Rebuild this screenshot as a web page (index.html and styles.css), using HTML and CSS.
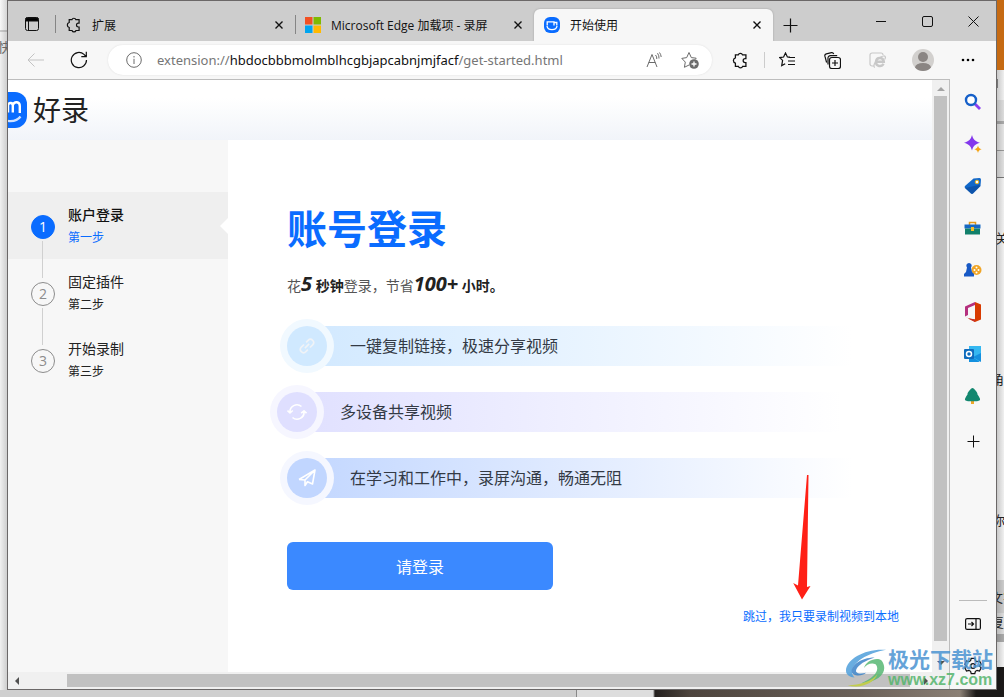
FILE: index.html
```html
<!DOCTYPE html>
<html lang="zh-CN">
<head>
<meta charset="utf-8">
<title>开始使用</title>
<link rel="stylesheet" href="styles.css">
</head>
<body>
<svg class="defs" aria-hidden="true">
  <symbol id="puzzle" viewBox="0 0 16 16"><path d="M3.200 2.700h2.700a2.100 2.100 0 0 1 4 0h3.200v3.500h-.7a1.900 1.900 0 0 0 0 3.800h.7v3.500H10a2.100 2.100 0 0 1-4 0H3.200v-3a2.600 2.600 0 0 1 0-5z"/></symbol>
  <symbol id="cross" viewBox="0 0 8 8"><path d="M.5.5l7 7M7.500.5l-7 7"/></symbol>
</svg>
<div class="desktop">
  <div class="behind behind-left"><span>快</span></div>
  <div class="behind behind-right">
    <i class="photo"></i><i class="pane"></i>
    <span class="t1">关</span><span class="t2">角</span><span class="t3">你</span><span class="t4">文字</span><span class="t5">复</span>
  </div>
  <div class="behind behind-bottom"></div>

  <div class="window">
    <header class="tabstrip">
      <button class="tab-menu" aria-label="标签页操作"><svg class="line" width="16" height="16" viewBox="0 0 16 16"><rect x="1.500" y="1.500" width="13" height="13" rx="2"/><path d="M2 2h12v3H2z" fill="#000"/><path d="M4.500 5v9"/></svg></button>
      <div class="tab">
        <svg class="line mid" width="16" height="16"><use href="#puzzle"/></svg><span>扩展</span>
        <button class="tab-close" aria-label="关闭"><svg class="line bold" width="8" height="8"><use href="#cross"/></svg></button>
      </div>
      <div class="tab">
        <svg width="16" height="16" viewBox="0 0 16 16"><path fill="#f25022" d="M0 0h7.500v7.500H0z"/><path fill="#7fba00" d="M8.500 0H16v7.500H8.500z"/><path fill="#00a4ef" d="M0 8.500h7.500V16H0z"/><path fill="#ffb900" d="M8.500 8.500H16V16H8.500z"/></svg><span>Microsoft Edge 加载项 - 录屏</span>
        <button class="tab-close" aria-label="关闭"><svg class="line bold" width="8" height="8"><use href="#cross"/></svg></button>
      </div>
      <div class="tab active">
        <svg width="16" height="16" viewBox="0 0 16 16"><rect width="16" height="16" rx="6" fill="#0a6cff"/><path d="M3.200 8.500V4.800H10V8.500M10 5.500h2.800V8.500M3 9c.5 4.800 9.500 4.800 10 0" fill="none" stroke="#fff" stroke-width="1.300"/></svg><span>开始使用</span>
        <button class="tab-close" aria-label="关闭"><svg class="line bold" width="8" height="8"><use href="#cross"/></svg></button>
      </div>
      <button class="tab-new" aria-label="新建标签页"><svg class="line mid" width="15" height="15" viewBox="0 0 15 15"><path d="M7.500.5v14M.5 7.500h14"/></svg></button>
      <div class="controls">
        <button aria-label="最小化"><svg class="line" width="10" height="10" viewBox="0 0 10 10"><path d="M0 5.500h10"/></svg></button>
        <button aria-label="最大化"><svg class="line" width="11" height="11" viewBox="0 0 11 11"><rect x=".5" y=".5" width="10" height="10" rx="1.500"/></svg></button>
        <button aria-label="关闭窗口"><svg class="line" width="11" height="11" viewBox="0 0 11 11"><path d="M.5.5l10 10M10.500.5l-10 10"/></svg></button>
      </div>
    </header>

    <nav class="toolbar">
      <button class="tool nav faint" aria-label="后退"><svg class="line" width="17" height="14" viewBox="0 0 17 14"><path d="M7.500.5L1 7l6.500 6.500M1 7h16"/></svg></button>
      <button class="tool nav" aria-label="刷新"><svg class="line mid" width="18" height="18" viewBox="0 0 18 18"><path d="M16.500 9A7.600 7.600 0 1 1 14 3.400L16 5.500M16.300.8v4.900h-5"/></svg></button>
      <div class="address">
        <svg class="line grey" width="16" height="16" viewBox="0 0 16 16"><circle cx="8" cy="8" r="7.300"/><path d="M8 6.800V12M8 4v1.500"/></svg>
        <div class="url" role="textbox" aria-label="地址栏">extension://<b>hbdocbbbmolmblhcgbjapcabnjmjfacf</b>/get-started.html</div>
        <button class="in-bar" aria-label="朗读"><svg class="line grey" width="16" height="16" viewBox="0 0 16 16"><path d="M1 15L6 2.500 11 15M2.700 10.500h6.600M9.500 3a5 5 0 0 1 1.300 4M11.500 1.200A8 8 0 0 1 13 6.500M13.500.5A9 9 0 0 1 15.200 5"/></svg></button>
        <button class="in-bar" aria-label="收藏此页"><svg class="line grey" width="18" height="18" viewBox="0 0 18 18"><path d="M8 14l-4.600 2.300.9-5.200L.8 7.400l4.900-.8L8 1.500l2.300 5.100 4.900.6-1 1.200"/><circle cx="13" cy="13" r="4.800" fill="#6b6b6b" stroke="none"/><path d="M13 10.500v5M10.500 13h5" stroke="#fff" stroke-width="1.300"/></svg></button>
      </div>
      <button class="tool ext" aria-label="扩展"><svg class="line mid" width="17" height="17"><use href="#puzzle"/></svg></button>
      <button class="tool" aria-label="收藏夹"><svg class="line mid" width="17" height="16" viewBox="0 0 17 16"><path d="M11 5.200L8.400 5 6.500 1 4.600 5 .8 5.600l2.800 2.800-.9 5.200 3.500-1.900M9.500 5.500H16M9 9h7M9 12.500h7"/></svg></button>
      <button class="tool" aria-label="集锦"><svg class="line mid" width="17" height="17" viewBox="0 0 17 17"><path d="M2.600 10.500L.9 4.200a2 2 0 0 1 1.400-2.400L7.500.7a2 2 0 0 1 2.200 1.200M4 12.500V6.300A2.500 2.500 0 0 1 6.500 3.600h6.700"/><rect x="5.500" y="5.500" width="11" height="11" rx="2.300"/><path d="M11 8v6M8 11h6"/></svg></button>
      <button class="tool" aria-label="IE 模式"><svg class="ie" width="18" height="17" viewBox="0 0 18 17"><path d="M5 14H3a2 2 0 0 1-2-2V3a2 2 0 0 1 2-2h9a2 2 0 0 1 2 2" /><path stroke-width="2.500" d="M6.500 9.800h8.300c0-5-7.600-5-7.800.3-.1 4.600 5.800 5 7.500 1.600"/><path d="M6 15.500C2.500 15 8 5 14.500 4c2.500-.3 2.200 1.800 1.200 3.500"/></svg></button>
      <button class="tool" aria-label="个人资料"><svg width="22" height="22" viewBox="0 0 22 22"><clipPath id="av"><circle cx="11" cy="11" r="11"/></clipPath><g clip-path="url(#av)"><path fill="#d2d0ce" d="M0 0h22v22H0z"/><circle cx="11" cy="8" r="5" fill="#8a8583"/><ellipse cx="11" cy="18.500" rx="8" ry="4.500" fill="#8a8583"/></g></svg></button>
      <button class="tool" aria-label="更多"><svg width="14" height="4" viewBox="0 0 14 4"><circle cx="2" cy="2" r="1.300"/><circle cx="7" cy="2" r="1.300"/><circle cx="12" cy="2" r="1.300"/></svg></button>
    </nav>

    <div class="content">
      <div class="viewport">
        <div class="page">
          <header class="brand">
            <svg width="19" height="36" viewBox="0 0 19 36"><rect x="-17" width="36" height="36" rx="12" fill="#0a6cff"/><path d="M-5 20V12M0 11.500v9M0 13c1-3 4.800-2.500 4.800.5v7M4.800 13c1.500-4 7-3.500 7 1v7" fill="none" stroke="#fff" stroke-width="2.400"/><path d="M-10 22C-6 31 8 31 12.500 24.500" fill="none" stroke="#cfe2ff" stroke-width="2.200"/></svg>
            <span>好录</span>
          </header>
          <div class="columns">
            <ol class="steps">
              <li class="step current"><span class="num">1</span><div><strong>账户登录</strong><small>第一步</small></div></li>
              <li class="step"><span class="num">2</span><div><strong>固定插件</strong><small>第二步</small></div></li>
              <li class="step"><span class="num">3</span><div><strong>开始录制</strong><small>第三步</small></div></li>
            </ol>
            <main class="login">
              <h1>账号登录</h1>
              <p class="lead">花<em>5</em> <b>秒钟</b>登录，节省<em>100+</em> <b>小时。</b></p>
              <ul class="features">
                <li class="sky"><span class="badge"><svg width="18" height="18" viewBox="0 0 18 18"><g transform="rotate(-45 9 9)"><path d="M8 5.800H4.200a3.200 3.200 0 0 0 0 6.400H7M10 12.200h3.800a3.200 3.200 0 0 0 0-6.400H11M6 9h6"/></g></svg></span>一键复制链接，极速分享视频</li>
                <li class="violet"><span class="badge"><svg width="20" height="18" viewBox="0 0 20 18"><path d="M3 9.500A7 7 0 0 1 14.500 3.500M17 8.500A7 7 0 0 1 5.500 14.500M.5 7.500L3 10l2.800-2.500M14.200 10.200L17 7.800l2.500 2.400"/></svg></span>多设备共享视频</li>
                <li class="blue"><span class="badge"><svg width="18" height="18" viewBox="0 0 18 18"><path d="M1 10.500L17 1l-2.500 14-5-2.300L7 16.500V11L17 1M1 10.500L7 11"/></svg></span>在学习和工作中，录屏沟通，畅通无阻</li>
              </ul>
              <button class="signin">请登录</button>
              <a class="skip" href="#">跳过，我只要录制视频到本地</a>
              <svg class="pointer" width="18" height="125" viewBox="0 0 18 125"><path fill="#ff2016" d="M14 0h1.500L14 112l3.500-1L9 124.500.2 108l4.800 2.500z"/></svg>
            </main>
          </div>
        </div>
        <div class="vbar"><i class="up"></i><i class="thumb"></i><i class="down"></i></div>
        <div class="hbar"><i class="left"></i><i class="thumb"></i><i class="right"></i></div>
      </div>

      <aside class="sidebar">
        <button aria-label="搜索"><svg width="18" height="18" viewBox="0 0 18 18"><path d="M11 11l5 5" stroke="#8a3ff0" stroke-width="2.800"/><circle cx="7" cy="7" r="5" fill="#fff" stroke="#1660c9" stroke-width="2.400"/></svg></button>
        <button aria-label="发现"><svg width="18" height="18" viewBox="0 0 18 18"><path fill="#8338ec" d="M8 0c1.200 4.500 3 6.300 8 7.800-5 1.500-6.800 3.200-8 7.700C6.800 11 5 9.300 0 7.800 5 6.300 6.800 4.500 8 0z"/><path fill="#f5a516" d="M14 10.500c.5 2.200 1.500 3 3.700 3.700-2.200.6-3.200 1.500-3.700 3.700-.5-2.200-1.500-3.100-3.700-3.700 2.200-.7 3.200-1.500 3.700-3.700z"/></svg></button>
        <button aria-label="购物"><svg width="18" height="18" viewBox="0 0 18 18"><path fill="#1268c9" d="M9.500 1.500L15.500 1a1.500 1.500 0 0 1 1.500 1.500l-.5 6.500-7.500 7.500a1.500 1.500 0 0 1-2 0L1 11a1.500 1.500 0 0 1 0-2z"/><path fill="#0b4897" d="M1 11l14-3 1.500 1L9 16.500a1.500 1.500 0 0 1-2 0z" opacity=".6"/><circle cx="13" cy="5" r="1.800" fill="#fff" stroke="#f2b61d"/></svg></button>
        <button aria-label="工具"><svg width="18" height="18" viewBox="0 0 18 18"><path fill="none" stroke="#e59a18" stroke-width="1.500" d="M5.500 6V3.500h6V6"/><path fill="#1668c2" d="M.5 5.500h16v4H.5z"/><path fill="#12806b" d="M1 9.500h15v6H1z"/><path fill="#f6bd27" d="M7 8h3v4H7z"/></svg></button>
        <button aria-label="游戏"><svg width="18" height="18" viewBox="0 0 18 18"><circle cx="12.500" cy="9" r="5" fill="#f0a526"/><g fill="#fff"><circle cx="12.500" cy="6.500" r="1"/><circle cx="10.500" cy="9" r="1"/><circle cx="14.500" cy="9" r="1"/><circle cx="12.500" cy="11.500" r="1"/></g><path fill="#1859c5" d="M5 2a2.700 2.700 0 0 1 2 4.500L8 11l2 2v2.500H0V13l2-2 1-4.500A2.700 2.700 0 0 1 5 2z"/></svg></button>
        <button aria-label="Office"><svg width="18" height="20" viewBox="0 0 18 20"><path fill="#d83b01" d="M11 0l6 2.500v15L11 20l-7-3.500 7 1V3z"/><path fill="#b5307e" d="M11 0L1 4.500v10l3-1.500V6l7-3z"/><path fill="#c8322b" d="M1 14.500L11 20v-2.500L4 16z"/></svg></button>
        <button aria-label="Outlook"><svg width="18" height="18" viewBox="0 0 18 18"><path fill="#35b8f1" d="M5 1h12v15H5z"/><path fill="#1490df" d="M17 8l-8 4 8 5zM5 10l11 7H5z"/><rect y="4" width="10" height="10" rx="1" fill="#0f6cbd"/><circle cx="5" cy="9" r="2.500" fill="none" stroke="#fff" stroke-width="1.500"/></svg></button>
        <button aria-label="树"><svg width="18" height="18" viewBox="0 0 18 18"><path fill="#efa728" d="M7 13h3v4H7z"/><path fill="#13876f" d="M8.500 1c1.500 0 5.500 5 5 6.500 1.500 2 3 4.500 2.500 5.500s-2.500 1.300-7.500 1.300S1.500 14 1 13s1-3.500 2.500-5.500C3 6 7 1 8.500 1z"/></svg></button>
        <button class="add" aria-label="添加"><svg class="line" width="13" height="13" viewBox="0 0 13 13"><path d="M6.500.5v12M.5 6.500h12"/></svg></button>
        <hr>
        <button aria-label="隐藏侧栏"><svg class="line mid" width="16" height="12" viewBox="0 0 16 12"><rect x=".6" y=".6" width="14.800" height="10.800" rx="1.500"/><path d="M11 1v10M3 6h5.500M6.500 4l2 2-2 2"/></svg></button>
        <button aria-label="设置"><svg class="line mid" width="18" height="18" viewBox="0 0 18 18"><circle cx="9" cy="9" r="2.300"/><path d="M7.200 1.300h3.600l.6 2.400 1.700 1 2.400-.7 1.700 3.100L15.500 9l1.700 1.900-1.700 3.100-2.400-.7-1.700 1-.6 2.400H7.200l-.6-2.400-1.700-1-2.400.7L.8 10.900 2.500 9 .8 7.100 2.500 4l2.400.7 1.700-1z"/></svg></button>
      </aside>
    </div>
  </div>

  <div class="watermark">
    <svg width="42" height="40" viewBox="0 0 44 40"><path fill="#4f9fdb" d="M42 1C22-1 0 10 0 23c0 4 4 7 9 7C-1 20 18 5 42 1z"/><path fill="#3c83c8" d="M30 9C15 9 5 18 6 24c1 5 11 5 15 1-8 2-12 0-10-4s9-9 19-12z"/><path fill="#58b874" d="M37 12c8 10 0 22-21 24C30 30 36 22 31 16c-4-2-10 0-12 4 1-7 13-12 18-8z"/><path fill="#c2cf3a" d="M2 38c12 0 26-4 31-12-3 10-18 16-31 12z"/></svg>
    <p><b>极光下载站</b><span>www.xz7.com</span></p>
  </div>
</div>
</body>
</html>
```
FILE: styles.css
```css
* { box-sizing: border-box; }
body {
  margin: 0;
  color: #222;
  font-family: "Open Sans", "Noto Sans CJK SC", sans-serif;
  font-size: 12px;
}
button {
  display: flex;
  align-items: center;
  justify-content: center;
  padding: 0;
  border: 0;
  background: none;
  font-family: inherit;
}
svg { display: block; flex: none; }
ul, ol { margin: 0; padding: 0; list-style: none; }
.defs { position: absolute; width: 0; height: 0; }
.line { fill: none; stroke: #111; stroke-width: 1; }
.line.mid { stroke-width: 1.2; }
.line.bold { stroke-width: 1.4; }
.line.grey { stroke: #6b6b6b; }
.faint .line { stroke: #c3c3c3; }
.ie { fill: none; stroke: #c8c8c8; stroke-width: 1.2; }

/* desktop behind the browser window */
.desktop {
  position: relative;
  display: flex;
  height: 100vh;
  padding: 0 7px 7px;
  overflow: hidden;
  background: #e3e3e3;
}
.behind { position: absolute; overflow: hidden; }
.behind span { position: absolute; white-space: nowrap; font-size: 13px; color: #222; }
.behind-left {
  inset: 0 auto 0 0;
  width: 7px;
  background: linear-gradient(90deg, transparent, rgba(0,0,0,.14)), linear-gradient(#f8f8f8 30px, #ccc 30px 32px, #f0f0f0 32px);
}
.behind-left span { top: 37px; right: -4px; color: #666; }
.behind-right {
  inset: 0 0 0 auto;
  width: 7px;
  background: linear-gradient(90deg, rgba(0,0,0,.16), transparent), linear-gradient(#efefef 100px, #ddd 100px 121px, #aaa 121px 124px, #e4e4e4 124px 150px, #999 150px 151px, #e0e0e0 151px 177px, #777 177px 178px, #f0f0f0 178px 580px, #ccc 580px 613px, #ddd 613px 634px, #aaa 634px 642px, #f2f2f2 642px 667px, #1b1918 667px);
}
.photo { position: absolute; inset: 0 0 auto 0; height: 70px; background: #c66a12; }
.pane { position: absolute; top: 79px; left: -5px; width: 6px; height: 9px; border: 1px solid #777; }
.t1 { top: 228px; left: -2px; }
.t2 { top: 369px; left: -6px; }
.t3 { top: 510px; left: -5px; }
.t4 { top: 587px; left: -7px; }
.t5 { top: 612px; left: -6px; }
.behind-bottom {
  inset: auto 0 0 0;
  height: 7px;
  background: linear-gradient(90deg, #cfcfcf 576px, #888 576px 577px, #ddd 577px 653px, #24201e 655px, #4d443d 690px, #6b6159 860px, #8b8075 960px, #1b1918 976px);
}

/* browser window */
.window {
  position: relative;
  display: flex;
  flex: 1;
  flex-direction: column;
  min-width: 0;
  border: 1px solid #6b6868;
  background: #f7f7f7;
}
.tabstrip {
  display: flex;
  height: 40px;
  padding-top: 8px;
  background: #cdcdcd;
}
.tab-menu { width: 48px; border-right: 1px solid #858585; margin: 6px 0 8px; }
.tab {
  display: flex;
  flex: 0 1 239px;
  align-items: center;
  min-width: 0;
  padding: 0 10px;
  gap: 10px;
  color: #111;
  white-space: nowrap;
}
.tab:not(.active) + .tab:not(.active) { background: linear-gradient(#858585, #858585) 0 6px / 1px 19px no-repeat; }
.tab.active { border-radius: 6px 6px 0 0; background: #f7f7f7; box-shadow: 0 0 2px #999; clip-path: inset(-3px -3px 0 -3px); }
.tab-close { width: 12px; height: 16px; margin: auto 0 auto auto; }
.tab-new { width: 34px; }
.controls { display: flex; margin: -8px 0 0 auto; }
.controls button { width: 46px; }

.toolbar {
  display: flex;
  align-items: center;
  height: 38px;
  padding: 0 6px 0 5px;
}
.tool { flex: none; width: 45px; height: 30px; }
.tool.nav { width: 44px; }
.tool.ext { width: 50px; margin-left: 3px; background: linear-gradient(#ccc, #ccc) right / 1px 16px no-repeat; }
.address {
  display: flex;
  flex: 1;
  align-items: center;
  min-width: 0;
  height: 30px;
  margin-left: 7px;
  padding: 0 13px 0 18px;
  border-radius: 15px;
  background: #fff;
  box-shadow: 0 0 2px #ddd;
}
.url { flex: 1; margin-left: 15px; overflow: hidden; color: #767676; font-family: "Noto Sans", sans-serif; font-size: 13px; white-space: nowrap; }
.url b { color: #111; font-weight: 400; }
.in-bar { width: 19px; }
.in-bar + .in-bar { margin-left: 17px; }

.content { display: flex; flex: 1; min-height: 0; }
.viewport {
  display: grid;
  flex: 1;
  grid-template: 1fr 17px / 1fr 17px;
  min-width: 0;
  border: solid #bdbdbd;
  border-width: 1px 1px 0 0;
  background: #f0f0f0;
}
.page { display: flex; flex-direction: column; min-width: 0; overflow: hidden; background: #fff; }

/* scroll bars */
.vbar { display: flex; flex-direction: column; align-items: center; }
.vbar .thumb { flex: 1; width: 13px; margin-bottom: 20px; background: #c1c1c1; }
.up, .down, .left, .right { width: 0; height: 0; border: 4px solid transparent; }
.up { margin: 3px 0 5px; border-bottom-color: #a3a3a3; }
.down { margin-bottom: 7px; border-top-color: #505050; border-bottom: 0; }
.hbar { display: flex; align-items: center; }
.hbar .thumb { flex: 1; height: 13px; margin: 0 14px 0 48px; background: #c1c1c1; }
.left { margin-left: 3px; border-right-color: #505050; }
.right { border-left-color: #505050; }

/* welcome page */
.brand {
  display: flex;
  flex: none;
  align-items: center;
  height: 60px;
  gap: 6px;
  background: linear-gradient(#fff 30%, #f1f4f9);
  font-size: 28px;
  line-height: 36px;
}
.columns { display: flex; flex: 1; min-height: 0; }
.steps { flex: 0 0 220px; padding-top: 52px; background: #f7f7f7; }
.step { position: relative; display: flex; align-items: center; height: 67px; padding: 2px 0 0 23px; gap: 13px; }
.step strong, .step small { display: block; }
.step strong { font-size: 14px; font-weight: 400; line-height: 22px; }
.step small { font-size: 12px; line-height: 24px; }
.num {
  display: flex;
  align-items: center;
  justify-content: center;
  width: 24px;
  height: 24px;
  border: 1px solid #8c8c8c;
  border-radius: 50%;
  color: #8c8c8c;
  font-size: 14px;
}
.step + .step::before {
  position: absolute;
  top: -18px;
  left: 34px;
  width: 1px;
  height: 37px;
  background: #d0d0d0;
  content: "";
}
.current { background: #efefef; }
.current strong { font-weight: 500; color: #111; }
.current small { color: #0a6cff; }
.current .num { border-color: #0a6cff; background: #0a6cff; color: #fff; }
.current::after {
  position: absolute;
  top: 26px;
  right: 0;
  border: solid transparent;
  border-width: 8px 8px 8px 0;
  border-right-color: #fff;
  content: "";
}
.login { position: relative; display: flex; flex: 1; flex-direction: column; min-width: 0; padding: 59px 33px 0 59px; }
h1 { margin: 0; color: #0a6cff; font-size: 40px; font-weight: 700; line-height: 60px; }
.lead { margin: 13px 0 26px; color: #555; font-size: 14px; line-height: 28px; white-space: nowrap; }
.lead b { color: #222; }
.lead em { color: #222; font-size: 20px; font-weight: 700; line-height: 20px; }
.features { display: grid; gap: 26px; }
.features li {
  display: flex;
  align-items: center;
  width: 565px;
  max-width: 100%;
  height: 40px;
  gap: 23px;
  border-radius: 20px 0 0 20px;
  color: #333a45;
  font-size: 16px;
  line-height: 20px;
  white-space: nowrap;
}
.badge {
  display: flex;
  flex: none;
  align-items: center;
  justify-content: center;
  width: 40px;
  height: 40px;
  border-radius: 50%;
}
.badge svg { fill: none; stroke: #fff; stroke-width: 1.6; stroke-linejoin: round; }
.sky { background: linear-gradient(90deg, #d0e8ff, #fff); }
.sky .badge { background: #d0e9ff; box-shadow: 0 0 0 7px #f1f9ff; }
.sky .badge svg { stroke: #f0f3f7; }
.violet { margin-left: -10px; background: linear-gradient(90deg, #dfdfff, #fff); }
.violet .badge { background: #dfdfff; box-shadow: 0 0 0 7px #f6f6ff; }
.blue { background: linear-gradient(90deg, #c1d6ff, #fff); }
.blue .badge { background: #c1d6ff; box-shadow: 0 0 0 7px #f5f7ff; }
.signin {
  width: 266px;
  height: 48px;
  margin-top: 44px;
  border-radius: 6px;
  background: #3b89ff;
  color: #fff;
  font-size: 16px;
}
.skip { align-self: flex-end; margin-top: 17px; color: #0a6cff; font-size: 12px; line-height: 20px; text-decoration: none; }
.pointer { position: absolute; top: 335px; right: 121px; }

/* browser sidebar */
.sidebar { display: flex; flex: 0 0 46px; flex-direction: column; align-items: center; padding: 2px 0; }
.sidebar button { flex: none; width: 42px; height: 42px; }
.sidebar .add { margin-top: 3px; }
.sidebar hr { width: 28px; margin: auto 0 2px; border: 0; border-top: 1px solid #bbb; }

.watermark { position: absolute; right: 11px; bottom: 8px; display: flex; align-items: center; opacity: .85; }
.watermark p { display: grid; margin: 0; }
.watermark b { color: #4b94d2; font-size: 21px; line-height: 24px; }
.watermark span { color: #55b56d; font: 700 16px/18px "Liberation Sans", sans-serif; }
```
